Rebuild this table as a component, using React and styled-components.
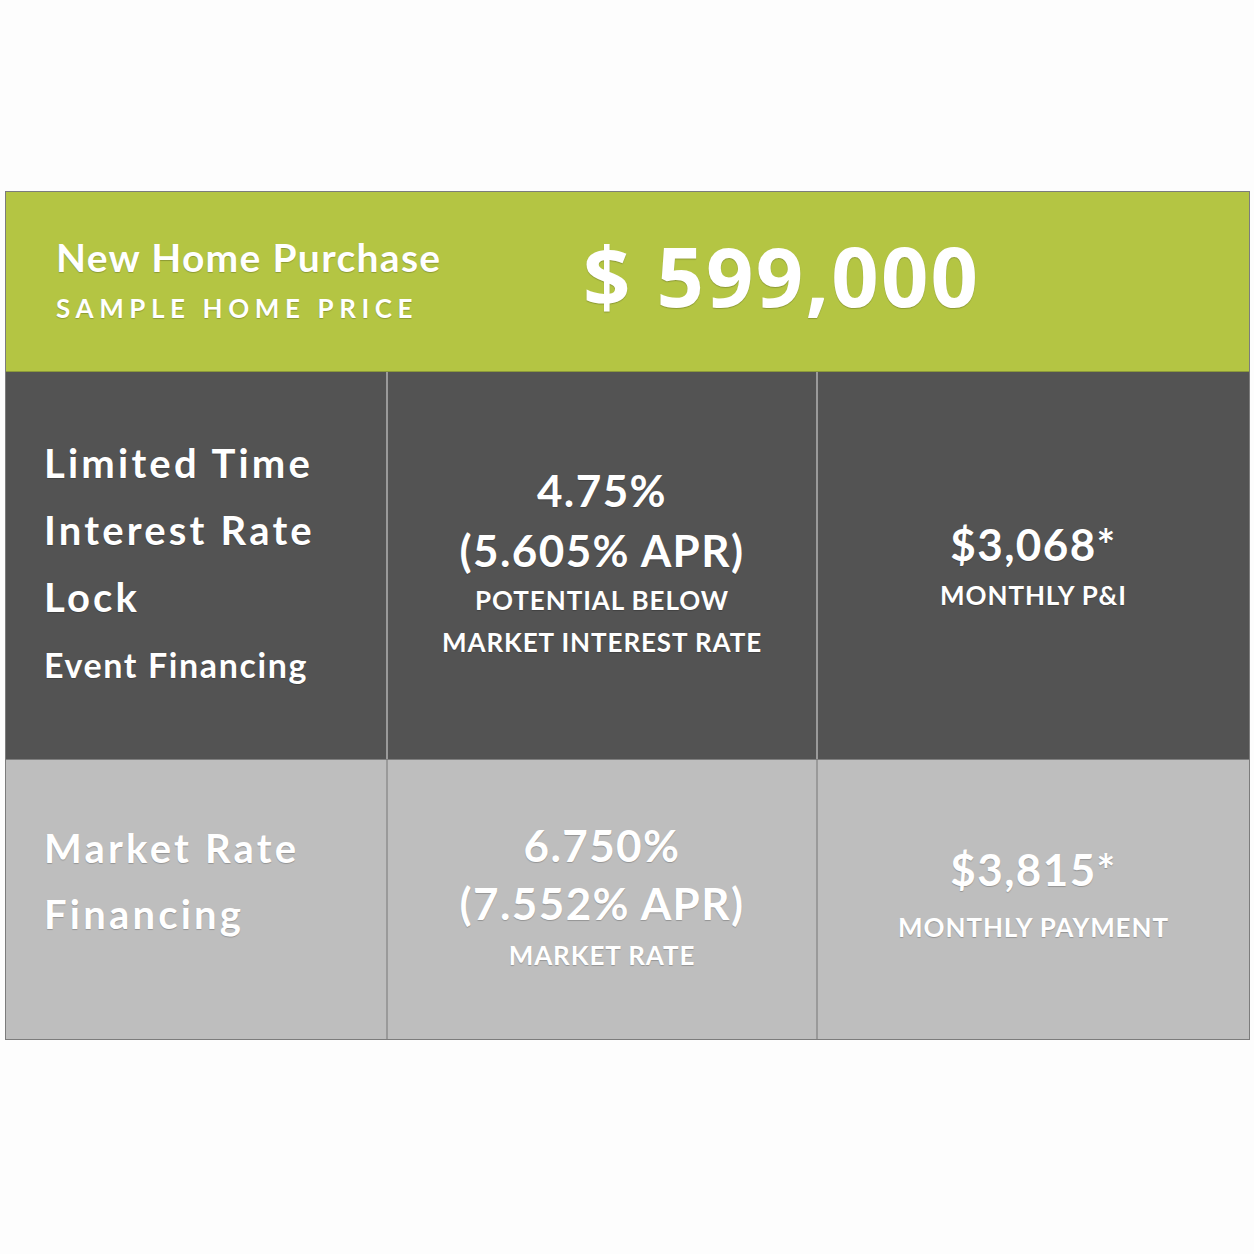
import styled, { createGlobalStyle } from "styled-components";

const Global = createGlobalStyle`
  html, body {
    margin: 0;
    padding: 0;
    background: #fdfdfd;
  }
  body {
    font-family: Lato, "Noto Sans", sans-serif;
  }
`

const Page = styled.div`
  width: 1254px;
  height: 1254px;
  padding-top: 191px;
  padding-left: 5px;
  box-sizing: border-box;
`
const Board = styled.div`
  width: 1245px;
  border: 1px solid #7c7c7c;
  box-sizing: border-box;
  color: #ffffff;
  text-shadow: 0 1px 1px rgba(0, 0, 0, 0.22);
`
const Banner = styled.header`
  height: 180px;
  background: #b4c543;
  display: grid;
  grid-template-columns: 577px 1fr;
  align-items: center;
  border-bottom: 1px solid #8c9a3a;
  box-sizing: border-box;
`
const BannerText = styled.div`
  padding-left: 50px;
  padding-top: 6px;
`
const BannerTitle = styled.div`
  font-size: 39px;
  font-weight: 700;
  letter-spacing: 1.3px;
  line-height: 46px;
`
const BannerSub = styled.div`
  font-size: 26px;
  font-weight: 700;
  letter-spacing: 5.6px;
  line-height: 56px;
`
const Price = styled.div`
  font-family: "Open Sans", sans-serif;
  font-size: 83px;
  font-weight: 700;
  letter-spacing: 2.2px;
  line-height: 1;
  padding-bottom: 14px;
`
const Row = styled.div`
  display: grid;
  grid-template-columns: 382px 430px 1fr;
  height: ${p => p.$height}px;
  background: ${p => p.$bg};
  border-bottom: ${p => (p.$last ? "none" : "1px solid #7e7e7e")};
  box-sizing: border-box;
`
const Cell = styled.div`
  padding-top: ${p => p.$top}px;
  padding-left: ${p => (p.$left ? 38 : 0)}px;
  text-align: ${p => (p.$left ? "left" : "center")};
  border-right: ${p => (p.$end ? "none" : "2px solid #9a9a9a")};
  box-sizing: border-box;
`
const Heading = styled.div`
  font-size: 40px;
  font-weight: 700;
  letter-spacing: 3.2px;
  line-height: ${p => p.$lh || 67}px;
`
const SubHeading = styled.div`
  font-size: 34px;
  font-weight: 700;
  letter-spacing: 1.6px;
  line-height: 68px;
`
const Value = styled.div`
  font-size: 44px;
  font-weight: 700;
  letter-spacing: 1.4px;
  line-height: ${p => p.$lh || 60}px;
`
const Caption = styled.div`
  font-size: 26px;
  font-weight: 700;
  letter-spacing: 0.9px;
  line-height: ${p => p.$lh || 43}px;
`

const App = () => {
    return (
        <Page>
            <Global/>
            <Board>
                <Banner>
                    <BannerText>
                        <BannerTitle>New Home Purchase</BannerTitle>
                        <BannerSub>SAMPLE HOME PRICE</BannerSub>
                    </BannerText>
                    <Price>$ 599,000</Price>
                </Banner>
                <Row $height={388} $bg="#535353">
                    <Cell $left $top={58}>
                        <Heading>Limited Time</Heading>
                        <Heading>Interest Rate</Heading>
                        <Heading>Lock</Heading>
                        <SubHeading>Event Financing</SubHeading>
                    </Cell>
                    <Cell $top={88}>
                        <Value>4.75%</Value>
                        <Value>(5.605% APR)</Value>
                        <Caption $lh={40}>POTENTIAL BELOW</Caption>
                        <Caption $lh={44}>MARKET INTEREST RATE</Caption>
                    </Cell>
                    <Cell $end $top={142}>
                        <Value>$3,068*</Value>
                        <Caption $lh={42}>MONTHLY P&amp;I</Caption>
                    </Cell>
                </Row>
                <Row $height={279} $bg="#bebebe" $last>
                    <Cell $left $top={55}>
                        <Heading $lh={66}>Market Rate</Heading>
                        <Heading $lh={66}>Financing</Heading>
                    </Cell>
                    <Cell $top={56}>
                        <Value $lh={58}>6.750%</Value>
                        <Value $lh={58}>(7.552% APR)</Value>
                        <Caption $lh={46}>MARKET RATE</Caption>
                    </Cell>
                    <Cell $end $top={80}>
                        <Value $lh={58}>$3,815*</Value>
                        <Caption $lh={58}>MONTHLY PAYMENT</Caption>
                    </Cell>
                </Row>
            </Board>
        </Page>
    );
};

export default App;
